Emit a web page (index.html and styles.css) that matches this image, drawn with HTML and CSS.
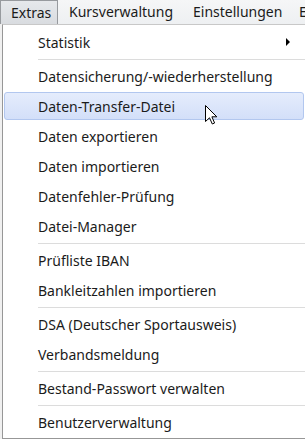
FILE: index.html
```html
<!DOCTYPE html>
<html lang="de">
<head>
  <meta charset="UTF-8" />
  <meta name="viewport" content="width=device-width, initial-scale=1.0"/>
  <title>Extras</title>
  <link rel="stylesheet" href="styles.css">
</head>
<body>
  <div class="menubar">
    <span class="bar-item bar-extras active">Extras</span>
    <span class="bar-item bar-kurs">Kursverwaltung</span>
    <span class="bar-item bar-einst">Einstellungen</span>
    <span class="bar-item">E</span>
  </div>

  <div class="menu">
    <div class="item">Statistik <span class="arrow"></span></div>
    <div class="sep"></div>
    <div class="item">Datensicherung/-wiederherstellung</div>
    <div class="item hover">Daten-Transfer-Datei</div>
    <div class="item">Daten exportieren</div>
    <div class="item">Daten importieren</div>
    <div class="item">Datenfehler-Prüfung</div>
    <div class="item">Datei-Manager</div>
    <div class="sep"></div>
    <div class="item">Prüfliste IBAN</div>
    <div class="item">Bankleitzahlen importieren</div>
    <div class="sep"></div>
    <div class="item">DSA (Deutscher Sportausweis)</div>
    <div class="item">Verbandsmeldung</div>
    <div class="sep"></div>
    <div class="item">Bestand-Passwort verwalten</div>
    <div class="sep"></div>
    <div class="item">Benutzerverwaltung</div>
  </div>

  <!-- mouse pointer over the hovered entry -->
  <svg class="cursor" width="13" height="20" viewBox="0 0 13 20">
    <path d="M0.5 0.5 L0.5 16.5 L4.5 12.8 L7.3 19 L9.6 18 L6.9 11.8 L11.8 11.8 Z"
          fill="#fff" stroke="#000" stroke-width="1" stroke-linejoin="miter"/>
  </svg>
</body>
</html>
```

FILE: styles.css
```css
body {
  margin: 0;
  width: 305px;
  height: 439px;
  overflow: hidden;
  background: #f0f0f0;
  font-family: "Noto Sans", "Open Sans", sans-serif;
  font-size: 14px;
  color: #1b1b1b;
  position: relative;
}
.menubar {
  display: flex;
  height: 24px;
  background: linear-gradient(#f5f6f7, #eef0f2);
  white-space: nowrap;
  overflow: hidden;
}
.bar-item {
  box-sizing: border-box;
  height: 24px;
  line-height: 23px;
  padding-left: 11px;
  flex: none;
}
.bar-extras { width: 58px; }
.bar-kurs { width: 124px; }
.bar-einst { width: 106px; }
.active {
  background: linear-gradient(#e6e8eb, #d9dce0);
  border: 1px solid #979a9e;
  border-bottom: none;
  padding-left: 10px;
}
.menu {
  display: flex;
  flex-direction: column;
  width: 302px;
  height: 411px;
  margin-left: 2px;
  padding-top: 2px;
  background: #fff;
  border: 1px solid #979797;
  border-top-color: #c8c8c8;
}
.item {
  box-sizing: border-box;
  display: flex;
  align-items: center;
  height: 28px;
  margin: 1px;
  padding-left: 33px;
  padding-right: 13px;
  border: 1px solid transparent;
  border-radius: 3px;
  white-space: nowrap;
}
.hover {
  background: linear-gradient(#e5ecfc, #d3dff9);
  border-color: #b2c7ef;
}
.arrow {
  margin-left: auto;
  width: 0;
  height: 0;
  border-left: 4px solid #000;
  border-top: 4px solid transparent;
  border-bottom: 4px solid transparent;
}
.sep {
  height: 1px;
  margin: 2px 0 1px 35px;
  background: #dcdcdc;
}
.cursor {
  position: absolute;
  left: 205px;
  top: 105px;
}
```
